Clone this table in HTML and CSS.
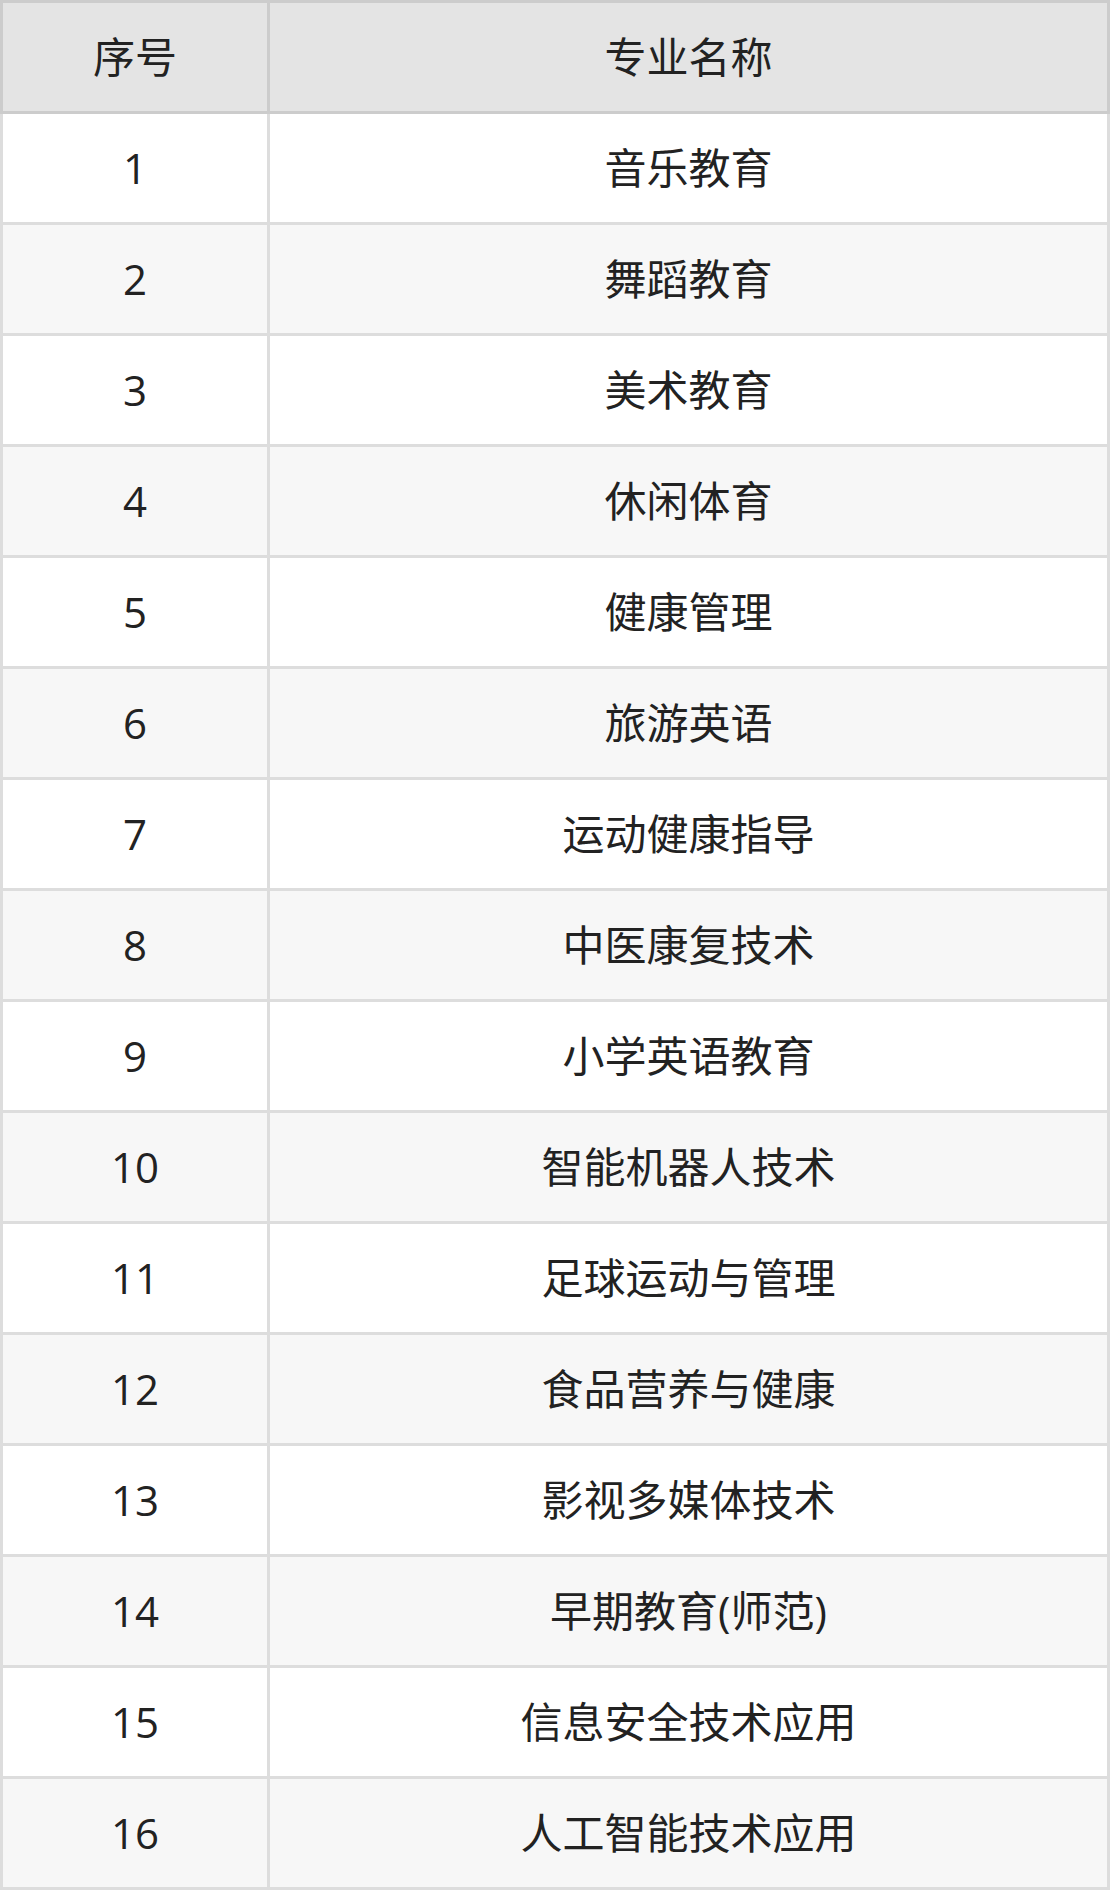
FILE: index.html
```html
<!DOCTYPE html>
<html lang="zh-CN">
<head>
<meta charset="utf-8">
<title>专业列表</title>
<link rel="stylesheet" href="styles.css">
</head>
<body>
<table class="major-table">
  <colgroup>
    <col class="col-no">
    <col class="col-name">
  </colgroup>
  <thead>
    <tr><th>序号</th><th>专业名称</th></tr>
  </thead>
  <tbody>
    <tr><td>1</td><td>音乐教育</td></tr>
    <tr><td>2</td><td>舞蹈教育</td></tr>
    <tr><td>3</td><td>美术教育</td></tr>
    <tr><td>4</td><td>休闲体育</td></tr>
    <tr><td>5</td><td>健康管理</td></tr>
    <tr><td>6</td><td>旅游英语</td></tr>
    <tr><td>7</td><td>运动健康指导</td></tr>
    <tr><td>8</td><td>中医康复技术</td></tr>
    <tr><td>9</td><td>小学英语教育</td></tr>
    <tr><td>10</td><td>智能机器人技术</td></tr>
    <tr><td>11</td><td>足球运动与管理</td></tr>
    <tr><td>12</td><td>食品营养与健康</td></tr>
    <tr><td>13</td><td>影视多媒体技术</td></tr>
    <tr><td>14</td><td>早期教育(师范)</td></tr>
    <tr><td>15</td><td>信息安全技术应用</td></tr>
    <tr><td>16</td><td>人工智能技术应用</td></tr>
  </tbody>
</table>
</body>
</html>
```
FILE: styles.css
```css
html, body {
  margin: 0;
  padding: 0;
  background: #ffffff;
}
.major-table {
  width: 1110px;
  border-collapse: collapse;
  table-layout: fixed;
  font-family: "Open Sans", "Noto Sans CJK SC", sans-serif;
  font-size: 42px;
  color: #222222;
}
.col-no { width: 267px; }
.major-table th,
.major-table td {
  height: 108px;
  padding: 0;
  text-align: center;
  vertical-align: middle;
  font-weight: normal;
  border: 3px solid #dddddd;
  line-height: 1;
}
.major-table th {
  background: #e4e4e4;
  border-color: #cccccc;
}
.major-table tbody tr:nth-child(odd) td { background: #ffffff; }
.major-table tbody tr:nth-child(even) td { background: #f7f7f7; }
```
